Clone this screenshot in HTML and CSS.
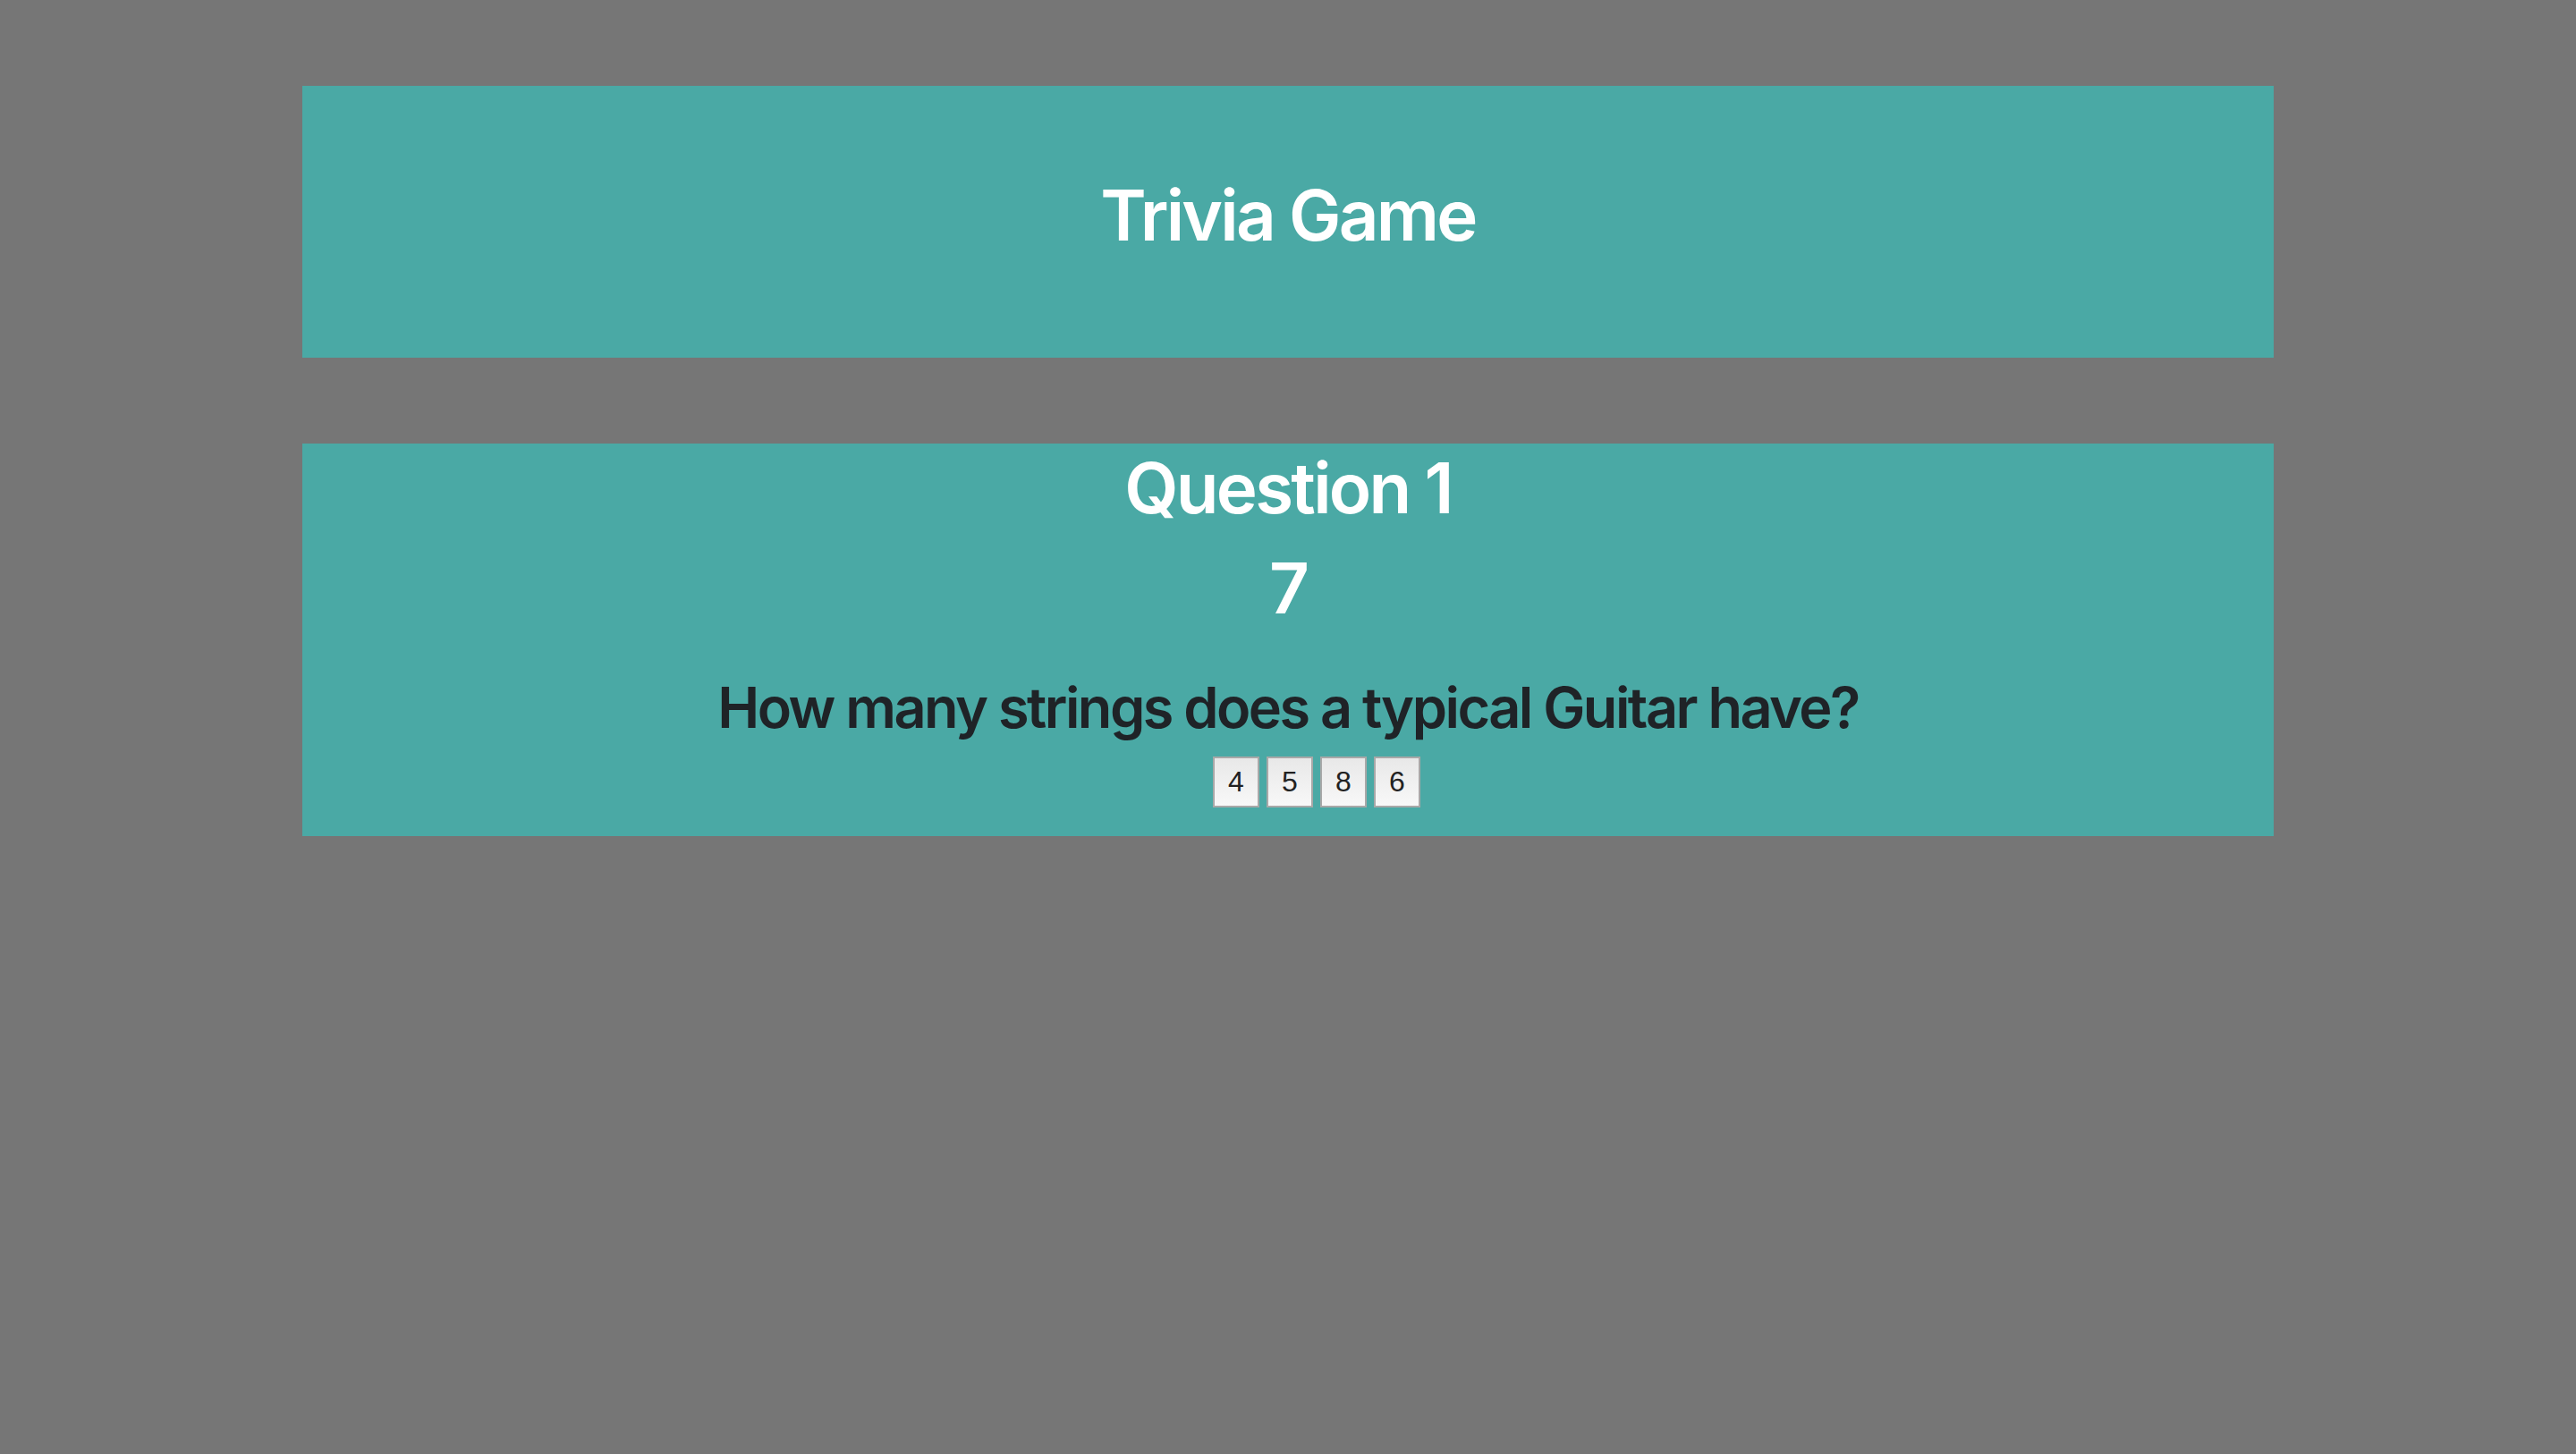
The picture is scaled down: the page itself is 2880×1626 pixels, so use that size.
FILE: index.html
```html
<!DOCTYPE html>
<html lang="en">
<head>
<meta charset="utf-8">
<title>Trivia Game</title>
<link rel="stylesheet" href="styles.css">
</head>
<body>
<main class="page">
  <header class="panel header-panel">
    <h1 class="title">Trivia Game</h1>
  </header>
  <section class="panel question-panel">
    <h1 class="title">Question 1</h1>
    <h1 class="title timer">7</h1>
    <h2 class="question">How many strings does a typical Guitar have?</h2>
    <div class="answers">
      <button class="answer">4</button>
      <button class="answer">5</button>
      <button class="answer">8</button>
      <button class="answer">6</button>
    </div>
  </section>
</main>
</body>
</html>
```
FILE: styles.css
```css
html, body {
  margin: 0;
  padding: 0;
  background: #767676;
}
body {
  font-family: Inter, "Noto Sans", "Liberation Sans", sans-serif;
  color: #212529;
  min-height: 1626px;
}
.page {
  width: 2204px;
  margin: 0 auto;
  padding-top: 96px;
  display: flex;
  flex-direction: column;
  gap: 96px;
}
.panel {
  background: #4aa9a5;
  text-align: center;
}
.header-panel {
  padding: 97px 0 95px;
}
.question-panel {
  padding: 2px 0 32px;
}
.title {
  margin: 0 0 16px;
  font-size: 78px;
  font-weight: 600;
  line-height: 96px;
  color: #ffffff;
  letter-spacing: -0.035em;
}
.timer {
  margin-bottom: 47px;
}
.question {
  margin: 0 0 16px;
  font-size: 63px;
  font-weight: 600;
  line-height: 77px;
  color: #1f2327;
  letter-spacing: -0.04em;
}
.answers {
  display: flex;
  justify-content: center;
  gap: 8px;
  padding-left: 64px;
}
.answer {
  width: 52px;
  height: 57px;
  padding: 0;
  border: 2px solid #a8a8a8;
  border-radius: 0;
  background: linear-gradient(#e8e8e8, #f8f8f8);
  font-family: "Liberation Sans", Arial, sans-serif;
  font-size: 32px;
  color: #222222;
}
```
